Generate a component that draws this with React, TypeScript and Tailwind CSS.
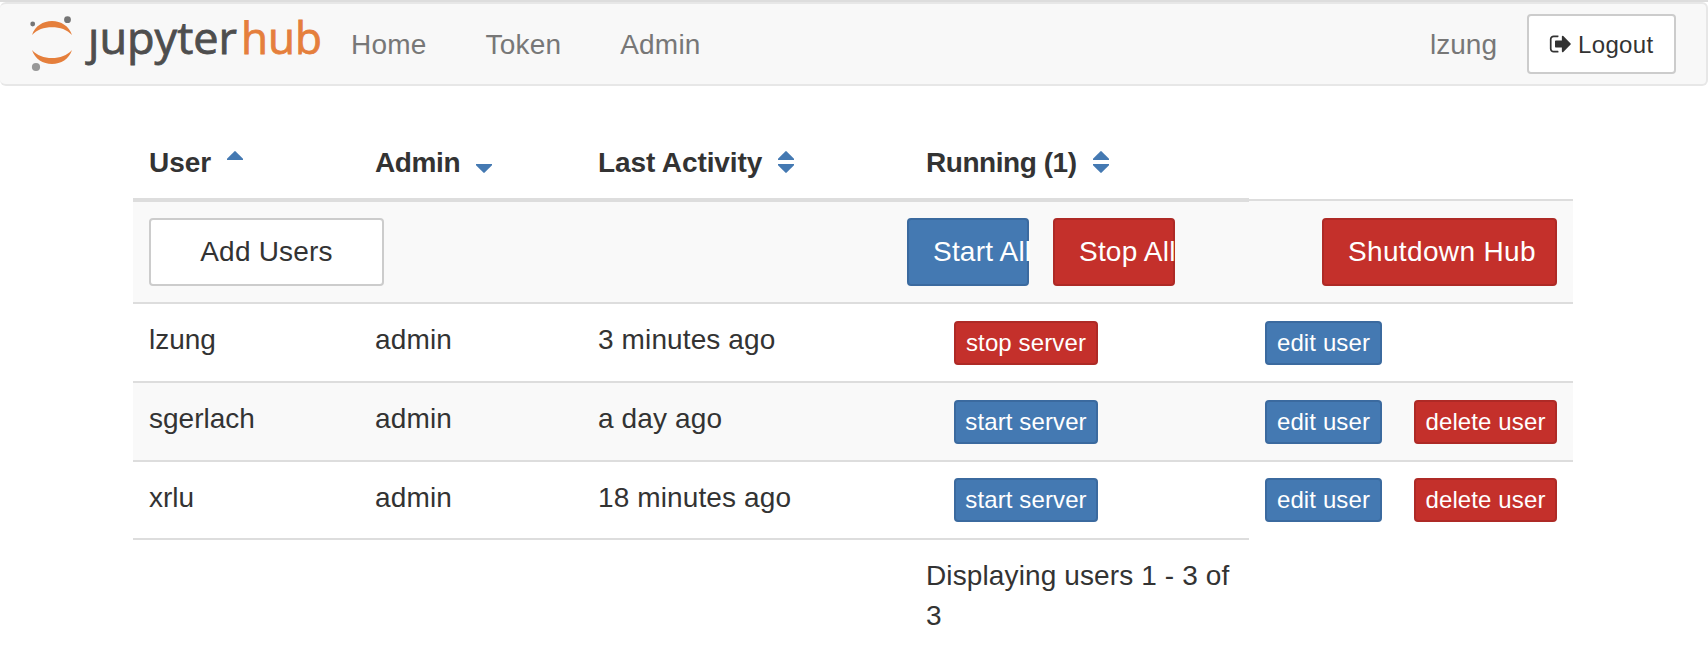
import React from "react";
import { clsx } from "clsx";

type Tone = "primary" | "danger" | "default";

const tones: Record<Tone, string> = {
  primary: "bg-[#4479b2] border-[#3b6a9f] text-white",
  danger: "bg-[#c4302b] border-[#ae2a26] text-white",
  default: "bg-white border-[#ccc] text-[#333]",
};

function Button({ tone, className, children }: { tone: Tone; className?: string; children: React.ReactNode }) {
  return (
    <button className={clsx("flex shrink-0 items-center rounded-[4px] border-2 whitespace-nowrap", tones[tone], className)}>
      {children}
    </button>
  );
}

function Logo() {
  return (
    <svg width="292" height="60" viewBox="30 14 292 60" className="block shrink-0 overflow-visible">
      <path d="M32 35C35 26 43 21 52 21S69 26 72 35C67 29.5 60 27.2 52 27.2S37 29.5 32 35Z" fill="#e57f3c" />
      <path d="M32 50C35 59 43 64 52 64S69 59 72 50C67 55.5 60 58 52 58S37 55.5 32 50Z" fill="#e57f3c" />
      <circle cx="32.7" cy="24" r="2.4" fill="#757575" />
      <circle cx="67.5" cy="19.7" r="3.4" fill="#757575" />
      <circle cx="36" cy="67" r="4.1" fill="#989898" />
      <g fontFamily="'Open Sans', 'Noto Sans', sans-serif" fontSize="43" strokeWidth="0.8">
        <text x="88" y="54" fill="#4e4e4e" stroke="#4e4e4e" textLength="149" lengthAdjust="spacingAndGlyphs">ȷupyter</text>
        <text x="241" y="54" fill="#e57f3c" stroke="#e57f3c" textLength="81" lengthAdjust="spacingAndGlyphs">hub</text>
      </g>
    </svg>
  );
}

function SignOutIcon() {
  return (
    <svg width="24" height="24" viewBox="0 0 1792 1792" fill="currentColor" className="block shrink-0">
      <path d="M704 1440q0 4 1 20t.5 26.5-3 23.5-10 19.5-20.5 6.5h-320q-119 0-203.5-84.5t-84.5-203.5v-704q0-119 84.5-203.5t203.5-84.5h320q13 0 22.5 9.5t9.5 22.5q0 4 1 20t.5 26.5-3 23.5-10 19.5-20.5 6.5h-320q-66 0-113 47t-47 113v704q0 66 47 113t113 47h312l11.5 1 11.5 3 8 5.5 7 9 2 13.5zm928-544q0 26-19 45l-544 544q-19 19-45 19t-45-19-19-45v-288h-448q-26 0-45-19t-19-45v-384q0-26 19-45t45-19h448v-288q0-26 19-45t45-19 45 19l544 544q19 19 19 45z" />
    </svg>
  );
}

function SortIcon({ up, down }: { up?: boolean; down?: boolean }) {
  return (
    <svg width="16" height="22" viewBox="0 0 16 22" fill="#4479b2" className="mt-[8px] block shrink-0">
      {up && <path d="M7.3.4Q8-.3 8.7.4L16 7.8V9H0V7.8Z" />}
      {down && <path d="M7.3 21.6Q8 22.3 8.7 21.6L16 14.2V13H0V14.2Z" />}
    </svg>
  );
}

const columns = [
  { label: "User", up: true, down: false, tracking: "" },
  { label: "Admin", up: false, down: true, tracking: "tracking-[-0.4px]" },
  { label: "Last Activity", up: true, down: true, tracking: "tracking-[-0.1px]" },
  { label: "Running (1)", up: true, down: true, tracking: "tracking-[-0.45px]" },
];

const users = [
  { name: "lzung", activity: "3 minutes ago", running: true, removable: false, height: "h-[79px]", pad: "pt-[17px]" },
  { name: "sgerlach", activity: "a day ago", running: false, removable: true, height: "h-[79px]", pad: "pt-[17px]" },
  { name: "xrlu", activity: "18 minutes ago", running: false, removable: true, height: "h-[78px]", pad: "pt-4" },
];

const small = "h-[44px] justify-center text-[24px] leading-[38px] tracking-[0.12px]";
const large = "h-[68px] text-[28px] leading-[40px]";

export default function App() {
  return (
    <div className="h-[656px] w-[1708px] overflow-hidden bg-white font-['Liberation_Sans',Arial,sans-serif] text-[28px] leading-[40px] text-[#333]">
      <div className="h-[2px] bg-[#ddd]" />
      <nav className="flex h-[84px] items-start rounded-[6px] border-y-2 border-r-2 border-[#e7e7e7] bg-[#f8f8f8] pr-[30px] pl-[30px] text-[#777]">
        <div className="pt-[10px]">
          <Logo />
        </div>
        <div className="flex gap-[59px] pt-[21px] pl-[29px] tracking-[0.2px]">
          <a>Home</a>
          <a>Token</a>
          <a>Admin</a>
        </div>
        <div className="ml-auto flex gap-[30px]">
          <span className="pt-[21px]">lzung</span>
          <Button tone="default" className="mt-[10px] h-[60px] w-[149px] gap-[5px] pl-[20px] text-[24px] leading-[36px] tracking-[0.35px]">
            <SignOutIcon />
            <span className="pt-px">Logout</span>
          </Button>
        </div>
      </nav>

      <table className="mt-[40px] ml-[133px] w-[1440px] table-fixed border-separate border-spacing-0">
        <colgroup>
          <col className="w-[226px]" />
          <col className="w-[223px]" />
          <col className="w-[328px]" />
          <col className="w-[339px]" />
          <col className="w-[324px]" />
        </colgroup>
        <thead>
          <tr className="h-[76px]">
            {columns.map((c) => (
              <th key={c.label} className="border-b-4 border-[#ddd] px-4 pt-[17px] pb-[15px] text-left align-top font-bold">
                <div className="flex gap-[16px]">
                  <span className={c.tracking}>{c.label}</span>
                  <SortIcon up={c.up} down={c.down} />
                </div>
              </th>
            ))}
            <th className="p-0 align-bottom">
              <div className="h-[3px] border-t-2 border-[#ddd] bg-[#f9f9f9]" />
            </th>
          </tr>
        </thead>
        <tbody>
          <tr className="h-[100px] bg-[#f9f9f9]">
            <td className="px-4 py-4">
              <Button tone="default" className={clsx(large, "w-[235px] justify-center tracking-[0.2px]")}>Add Users</Button>
            </td>
            <td />
            <td />
            <td className="py-4">
              <div className="-ml-[3px] flex gap-[24px]">
                <Button tone="primary" className={clsx(large, "w-[122px] pl-6 tracking-[0.2px]")}>Start All</Button>
                <Button tone="danger" className={clsx(large, "w-[122px] pl-6 tracking-[0.2px]")}>Stop All</Button>
              </div>
            </td>
            <td className="px-4 py-4">
              <Button tone="danger" className={clsx(large, "ml-auto w-[235px] pl-6 tracking-[0.35px]")}>Shutdown Hub</Button>
            </td>
          </tr>
          {users.map((u, i) => {
            const cell = clsx("border-t-2 border-[#ddd] px-4 align-top", i === 1 && "bg-[#f9f9f9]");
            return (
              <tr key={u.name} className={u.height}>
                <td className={clsx(cell, "pt-4")}>{u.name}</td>
                <td className={clsx(cell, "pt-4 tracking-[0.15px]")}>admin</td>
                <td className={clsx(cell, "pt-4 tracking-[0.12px]")}>{u.activity}</td>
                <td className={clsx(cell, u.pad)}>
                  <Button tone={u.running ? "danger" : "primary"} className={clsx(small, "ml-[28px] w-[144px]")}>
                    {u.running ? "stop server" : "start server"}
                  </Button>
                </td>
                <td className={clsx(cell, u.pad)}>
                  <div className="flex gap-[32px]">
                    <Button tone="primary" className={clsx(small, "w-[117px]")}>edit user</Button>
                    {u.removable && <Button tone="danger" className={clsx(small, "w-[143px]")}>delete user</Button>}
                  </div>
                </td>
              </tr>
            );
          })}
          <tr>
            <td className="border-t-2 border-[#ddd]" />
            <td className="border-t-2 border-[#ddd]" />
            <td className="border-t-2 border-[#ddd]" />
            <td className="border-t-2 border-[#ddd] px-4 pt-4 tracking-[0.12px]">Displaying users 1 - 3 of 3</td>
            <td />
          </tr>
        </tbody>
      </table>
    </div>
  );
}
